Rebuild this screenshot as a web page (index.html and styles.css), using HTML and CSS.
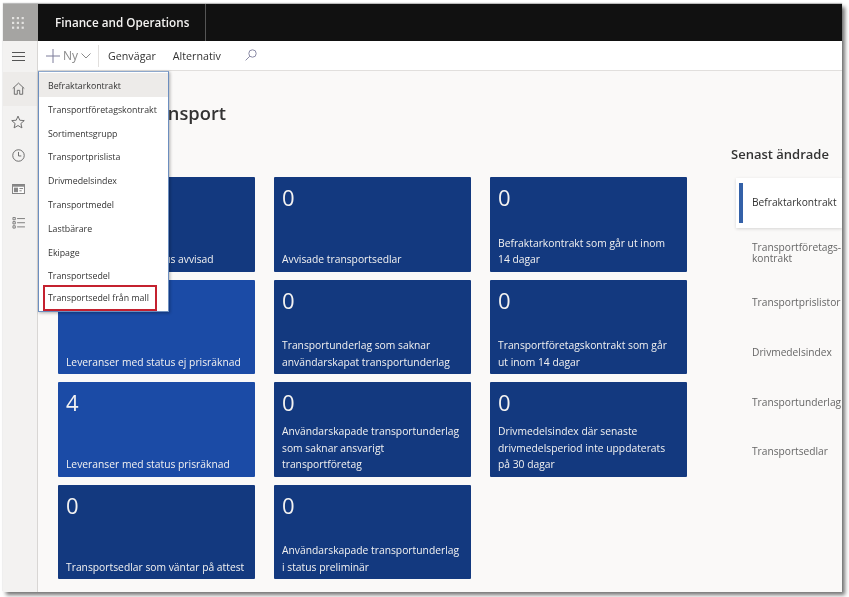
FILE: index.html
```html
<!DOCTYPE html>
<html lang="sv">
<head>
  <meta charset="UTF-8" />
  <title>Finance and Operations - Transport</title>
  <link rel="stylesheet" href="styles.css">
</head>
<body>
  <div class="window">
    <header class="topbar">
      <div class="waffle">
        <svg width="12" height="12" viewBox="0 0 12 12" fill="#e4e3e1">
          <rect x="0" y="0" width="2.200" height="2.200"/><rect x="4.800" y="0" width="2.200" height="2.200"/><rect x="9.600" y="0" width="2.200" height="2.200"/>
          <rect x="0" y="4.800" width="2.200" height="2.200"/><rect x="4.800" y="4.800" width="2.200" height="2.200"/><rect x="9.600" y="4.800" width="2.200" height="2.200"/>
          <rect x="0" y="9.600" width="2.200" height="2.200"/><rect x="4.800" y="9.600" width="2.200" height="2.200"/><rect x="9.600" y="9.600" width="2.200" height="2.200"/>
        </svg>
      </div>
      <div class="app-name">Finance and Operations</div>
    </header>

    <div class="frame">
      <nav class="sidenav">
        <div class="nav-item nav-menu">
          <svg width="13" height="9" viewBox="0 0 13 9" stroke="#555" fill="none"><path d="M0 .5h13M0 4.500h13M0 8.500h13"/></svg>
        </div>
        <div class="nav-item nav-home">
          <svg width="13" height="13" viewBox="0 0 14 14" stroke="#666" fill="none"><path d="M.8 7 7 1.200 13.200 7M2.500 5.800v7.400h3.200V9h2.600v4.200h3.200V5.800"/></svg>
        </div>
        <div class="nav-item">
          <svg width="14" height="14" viewBox="0 0 15 15" stroke="#666" fill="none"><path d="M7.500 1.200 9.400 5.600l4.800.4-3.600 3.100 1.100 4.700-4.200-2.500-4.200 2.500 1.100-4.700L.8 6l4.800-.4z"/></svg>
        </div>
        <div class="nav-item">
          <svg width="13" height="13" viewBox="0 0 14 14" stroke="#666" fill="none"><circle cx="7" cy="7" r="6.200"/><path d="M7 3.200V7.500h3"/></svg>
        </div>
        <div class="nav-item">
          <svg width="13" height="10" viewBox="0 0 14 11"><rect x=".5" y=".5" width="13" height="10" fill="#fff" stroke="#777"/><path d="M1 1h12v2H1z" fill="#888"/><path d="M2 4h4.500v5H2z" fill="#888"/><path d="M8 5h4M8 7.500h2.500" stroke="#777"/></svg>
        </div>
        <div class="nav-item">
          <svg width="13" height="12" viewBox="0 0 14 13" fill="none" stroke="#777"><path d="M1 .5h2.500v2.500H1zM1 5h2.500v2.500H1zM1 9.500h2.500V12H1z"/><path d="M5.500 1.700H14M5.500 6.200H14M5.500 10.700H14"/></svg>
        </div>
      </nav>

      <div class="main">
        <div class="toolbar">
          <div class="new-btn">
            <svg width="14" height="14" viewBox="0 0 14 14" stroke="#7d7d9a" fill="none"><path d="M7 0v14M0 7h14"/></svg>
            <span>Ny</span>
            <svg class="chevron" width="10" height="6" viewBox="0 0 10 6" stroke="#8a8a8a" fill="none"><path d="M.5.500 5 5 9.500.5"/></svg>
          </div>
          <span class="tool">Genvägar</span>
          <span class="tool">Alternativ</span>
          <svg class="search" width="12" height="12" viewBox="0 0 12 12" stroke="#8a8aa5" fill="none"><circle cx="7.500" cy="4.500" r="3.700"/><path d="M4.800 7.200.6 11.400"/></svg>
        </div>

        <div class="content">
          <section class="workspace">
            <h1>Transport</h1>
            <div class="tiles">
              <div class="tile"><div class="count">0</div><div class="label">Leveranser med status avvisad</div></div>
              <div class="tile"><div class="count">0</div><div class="label">Avvisade transportsedlar</div></div>
              <div class="tile"><div class="count">0</div><div class="label">Befraktarkontrakt som går ut inom 14 dagar</div></div>
              <div class="tile tile-light"><div class="count">0</div><div class="label">Leveranser med status ej prisräknad</div></div>
              <div class="tile"><div class="count">0</div><div class="label">Transportunderlag som saknar användarskapat transportunderlag</div></div>
              <div class="tile"><div class="count">0</div><div class="label">Transportföretagskontrakt som går ut inom 14 dagar</div></div>
              <div class="tile tile-light"><div class="count">4</div><div class="label">Leveranser med status prisräknad</div></div>
              <div class="tile"><div class="count">0</div><div class="label">Användarskapade transportunderlag som saknar ansvarigt transportföretag</div></div>
              <div class="tile"><div class="count">0</div><div class="label">Drivmedelsindex där senaste drivmedelsperiod inte uppdaterats på 30 dagar</div></div>
              <div class="tile"><div class="count">0</div><div class="label">Transportsedlar som väntar på attest</div></div>
              <div class="tile"><div class="count">0</div><div class="label">Användarskapade transportunderlag i status preliminär</div></div>
            </div>
          </section>

          <aside class="recent">
            <h2>Senast ändrade</h2>
            <div class="recent-item active"><span>Befraktarkontrakt</span></div>
            <div class="recent-item"><span>Transportföretags-<br>kontrakt</span></div>
            <div class="recent-item"><span>Transportprislistor</span></div>
            <div class="recent-item"><span>Drivmedelsindex</span></div>
            <div class="recent-item"><span>Transportunderlag</span></div>
            <div class="recent-item"><span>Transportsedlar</span></div>
          </aside>
        </div>

        <div class="menu">
          <div class="menu-item selected">Befraktarkontrakt</div>
          <div class="menu-item">Transportföretagskontrakt</div>
          <div class="menu-item">Sortimentsgrupp</div>
          <div class="menu-item">Transportprislista</div>
          <div class="menu-item">Drivmedelsindex</div>
          <div class="menu-item">Transportmedel</div>
          <div class="menu-item">Lastbärare</div>
          <div class="menu-item">Ekipage</div>
          <div class="menu-item">Transportsedel</div>
          <div class="menu-item marked">Transportsedel från mall</div>
        </div>
      </div>
    </div>
  </div>
</body>
</html>
```

FILE: styles.css
```css
html, body { margin: 0; height: 100%; background: #fff; overflow: hidden; }
body { font-family: "Open Sans", "Noto Sans", sans-serif; color: #333; }

.window {
  margin: 4px 7px 0 3px;
  height: 588px;
  display: flex;
  flex-direction: column;
  background: #faf9f8;
  overflow: hidden;
  box-shadow: 3px 3px 4px rgba(0,0,0,0.55), 0 -1px 1px rgba(0,0,0,0.25);
  filter: blur(0.3px);
}

.topbar { height: 37px; flex: none; display: flex; background: #111; color: #f3f2f1; }
.waffle { width: 35px; padding-right: 5px; box-sizing: border-box; display: flex; align-items: center; justify-content: center; background: #a5a4a2; }
.app-name {
  width: 168px; padding-left: 17px; box-sizing: border-box;
  line-height: 37px; font-size: 11.700px; font-weight: 600;
  border-right: 1px solid #555;
}

.frame { flex: 1; display: flex; min-height: 0; }

.sidenav { width: 35px; flex: none; box-sizing: border-box; background: #f3f2f1; border-right: 1px solid #d8d6d4; }
.nav-item { height: 33.500px; padding-right: 4px; display: flex; align-items: center; justify-content: center; }
.nav-menu { height: 31px; }
.nav-home { background: #edebe9; }

.main { flex: 1; position: relative; min-width: 0; display: flex; flex-direction: column; }

.toolbar {
  height: 30px; flex: none; display: flex; align-items: center;
  background: #fff; border-bottom: 1px solid #e1dfdd; box-sizing: border-box;
  font-size: 10.700px; color: #333;
}
.new-btn {
  display: flex; align-items: center; height: 22px;
  padding: 0 7px 0 8px; margin-right: 9px;
  color: #8a8a8a; font-size: 12px;
  border-right: 1px solid #e1dfdd;
}
.new-btn span { margin: 0 3px 0 3px; }
.tool { margin-right: 17px; }
.search { margin-left: 7px; margin-top: -1px; }

.content { flex: 1; display: flex; min-height: 0; }

.workspace { width: 693px; flex: none; padding: 27px 0 0 20px; box-sizing: border-box; }
h1 { margin: 0 0 49px; padding-left: 81px; font-size: 18.300px; line-height: 30px; font-weight: 600; color: #333; }

.tiles { display: grid; grid-template-columns: repeat(3, 197px); grid-auto-rows: 94.500px; column-gap: 19px; row-gap: 8px; }
.tile {
  display: flex; flex-direction: column; justify-content: space-between;
  padding: 6px 8px 4px; box-sizing: border-box;
  background: #13397f; color: #f3f2f1; border-radius: 1px;
}
.tile-light { background: #1b4ba6; }
.count { font-size: 22px; line-height: 28px; }
.label { font-size: 10.300px; line-height: 16.500px; }

.recent { flex: 1; padding-top: 73px; min-width: 0; }
h2 { margin: 0 0 14px; font-size: 13px; line-height: 20px; font-weight: 600; color: #333; }
.recent-item {
  height: 49.800px; margin-left: 5px; display: flex; align-items: center;
  padding-left: 16px; position: relative;
  font-size: 10.200px; line-height: 11px; color: #666; white-space: nowrap;
}
.recent-item.active { background: #fff; color: #333; box-shadow: 0 1px 3px rgba(0,0,0,0.15); }
.recent-item.active::before {
  content: ""; position: absolute; left: 3px; top: 5px; bottom: 5px;
  width: 4px; background: #3461a8;
}

.menu {
  position: absolute; left: 0; top: 30px; width: 131px;
  padding-top: 1px; box-sizing: border-box;
  background: #fff; border: 1px solid #6c8ebf; border-top-color: #8ea8cc;
  box-shadow: 1px 1px 3px rgba(0,0,0,0.3);
  font-size: 8.800px; color: #333;
}
.menu-item { height: 23.800px; line-height: 26px; padding-left: 9px; white-space: nowrap; }
.menu-item.selected { background: #edebe9; }
.menu-item.marked {
  margin: -2px 11px 0 4px; padding-left: 5px;
  height: 26px; line-height: 27px;
  outline: 2.500px solid #c4212f; outline-offset: -2.500px;
}
```
